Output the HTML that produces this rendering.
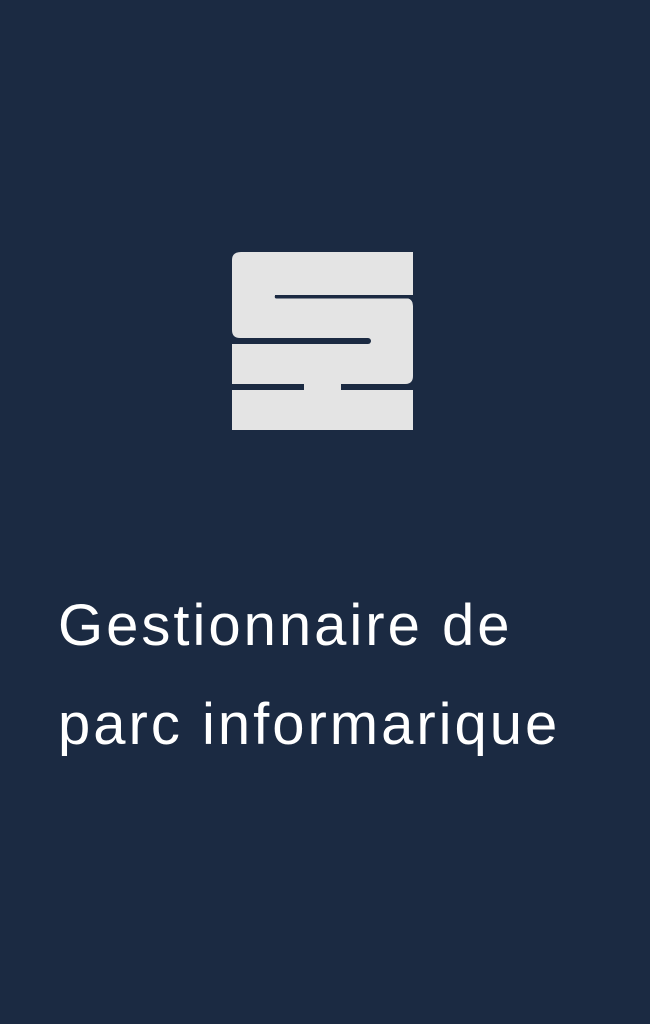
<!DOCTYPE html>
<html><head><meta charset="utf-8"><style>
html,body{margin:0;padding:0;width:650px;height:1024px;background:#1b2a42;overflow:hidden}
svg{position:absolute;left:0;top:0}
.t{position:absolute;left:58px;color:#fff;font-family:"Liberation Sans",sans-serif;font-weight:300;font-size:58px;letter-spacing:3px;white-space:nowrap;line-height:1}
</style></head><body>
<svg width="650" height="500" viewBox="0 0 650 500">
<g fill="#e4e4e4">
<path d="M241 252 H413 V295 H275 V298 H405 Q413 298 413 306 V376 Q413 384 405 384 H232 V344 H232 V338 H232 V260 Q232 252 241 252 Z"/>
<rect x="232" y="390" width="181" height="40"/>
<rect x="304" y="383" width="37" height="8"/>
</g>
<g fill="#1b2a42">
<path d="M276.5 295 H413 V298.5 H276.5 A1.75 1.75 0 0 1 276.5 295 Z"/>
<path d="M232 338 H368 A3 3 0 0 1 368 344 H232 Z"/>
<path d="M232 330 Q232 338 240 338 H232 Z"/>
<path d="M413 298 V306 Q413 298 405 298 Z"/>
</g>
</svg>
<div class="t" style="top:597px">Gestionnaire de</div>
<div class="t" style="top:696px">parc informarique</div>
</body></html>
